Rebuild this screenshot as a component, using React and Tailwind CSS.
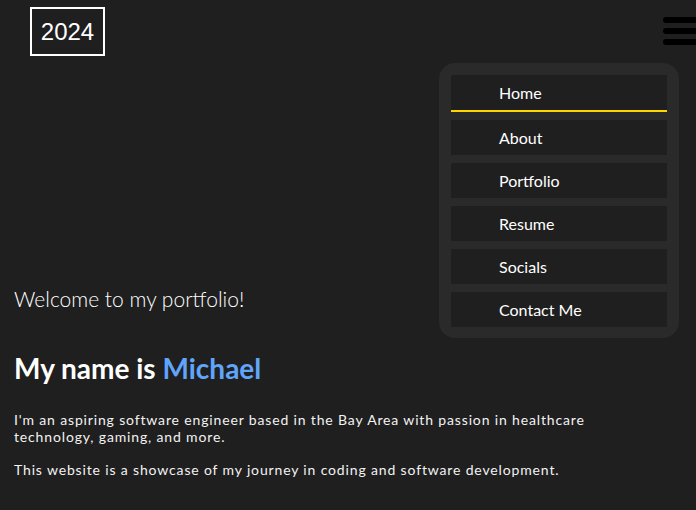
const NAV = ["Home", "About", "Portfolio", "Resume", "Socials", "Contact Me"];

export default function App() {
  return (
    <div className="relative min-h-[510px] bg-[#1f1f1f] text-white overflow-hidden font-['Lato',sans-serif]">
      {/* Header */}
      <header className="flex items-start justify-between h-[63px] pl-[30px] pt-[7px]">
        <div className="border-2 border-white w-[75px] h-[49px] flex items-center justify-center text-[24px] font-['Liberation_Sans',sans-serif]">
          2024
        </div>
        <button className="flex flex-col gap-[5px] mt-[10px] -mr-[8px]">
          <span className="block w-[41px] h-[6px] rounded-full bg-black" />
          <span className="block w-[41px] h-[6px] rounded-full bg-black" />
          <span className="block w-[41px] h-[6px] rounded-full bg-black" />
        </button>
      </header>

      {/* Dropdown menu */}
      <nav className="absolute left-[439px] top-[63px] w-[240px] bg-[#2a2a2a] rounded-[16px] p-[12px] pb-[11px] flex flex-col gap-[8px]">
        {NAV.map((item, i) => (
          <a
            key={item}
            href="#"
            className={
              i === 0
                ? "flex items-center h-[37px] pl-[48px] pt-[1px] bg-[#1f1f1f] border-b-2 border-[#ffd600] text-[16px]"
                : "flex items-center h-[35px] pl-[48px] bg-[#1f1f1f] text-[16px]"
            }
          >
            {item}
          </a>
        ))}
      </nav>

      {/* Hero */}
      <section className="px-[14px] pt-[222px]">
        <p className="text-[21px] font-light leading-[28px]">Welcome to my portfolio!</p>
        <h1 className="mt-[39px] text-[28px] font-bold leading-[33px]">
          My name is <span className="text-[#60a5fa]">Michael</span>
        </h1>
        <div className="mt-[26px] w-[600px] text-[14px] leading-[17px] tracking-[0.85px] text-[#f2f2f2]">
          <p>
            I'm an aspiring software engineer based in the Bay Area with passion in healthcare
            technology, gaming, and more.
          </p>
          <p className="mt-[16px]">
            This website is a showcase of my journey in coding and software development.
          </p>
        </div>
      </section>
    </div>
  );
}
